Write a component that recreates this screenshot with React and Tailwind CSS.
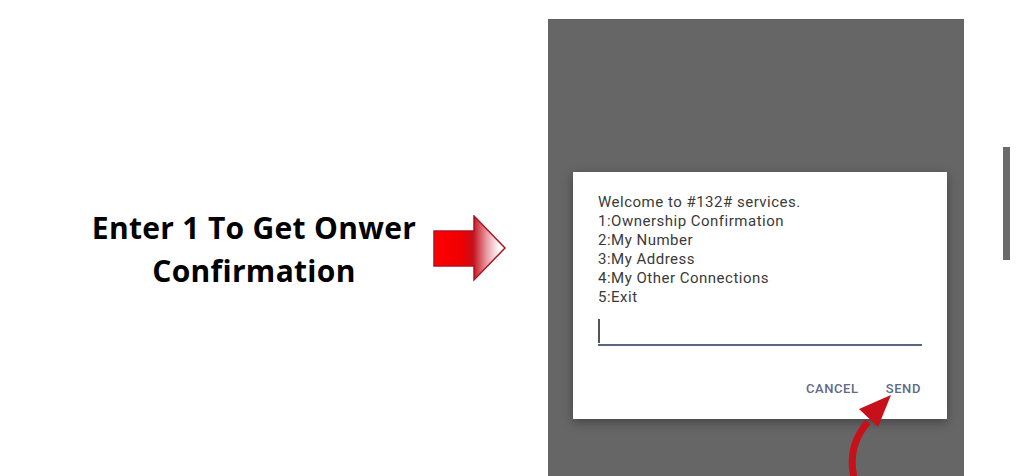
import React from 'react';

const menuLines = [
  'Welcome to #132# services.',
  '1:Ownership Confirmation',
  '2:My Number',
  '3:My Address',
  '4:My Other Connections',
  '5:Exit',
];

const RightArrow = () => (
  <svg width="74" height="68" viewBox="0 0 74 68" className="shrink-0">
    <defs>
      <linearGradient id="arrowFill" x1="0" y1="0" x2="1" y2="0">
        <stop offset="0" stopColor="#ff0000" />
        <stop offset="0.4" stopColor="#ee0000" />
        <stop offset="0.55" stopColor="#c4101c" />
        <stop offset="0.75" stopColor="#e8a0a6" />
        <stop offset="0.92" stopColor="#ffffff" />
        <stop offset="1" stopColor="#ffffff" />
      </linearGradient>
    </defs>
    <path
      d="M1 16 H41 V1 L72 33 L41 65 V51 H1 Z"
      fill="url(#arrowFill)"
      stroke="#b3121f"
      strokeWidth="1.5"
      strokeLinejoin="miter"
    />
  </svg>
);

const CurvedArrow = () => (
  <svg width="60" height="90" viewBox="0 0 60 90" className="absolute left-[838px] top-[390px]">
    <path
      d="M16 88 C12 70 14 50 30 32"
      fill="none"
      stroke="#c8101a"
      strokeWidth="7"
      strokeLinecap="butt"
    />
    <path d="M53 5 L21 19 L40 37 Z" fill="#c8101a" />
  </svg>
);

const App = () => {
  return (
    <div className="relative w-[1024px] h-[476px] bg-white overflow-hidden flex">
      {/* Left caption */}
      <div className="w-[548px] shrink-0 flex items-center pl-[84px] pt-[22px]">
        <p
          className="w-[340px] text-center text-[30px] leading-[43px] font-bold tracking-[0.3px] text-black"
          style={{ fontFamily: '"Open Sans", "Liberation Sans", sans-serif' }}
        >
          Enter 1 To Get Onwer
          <br />
          Confirmation
        </p>
        <div className="ml-[9px] mt-[-1px]">
          <RightArrow />
        </div>
      </div>

      {/* Phone screen */}
      <div className="mt-[19px] w-[416px] h-[457px] bg-[#666666] shrink-0 border-t border-[#5f5f6a]">
        <div
          className="ml-[25px] mt-[152px] w-[374px] h-[247px] bg-white shadow-[0_3px_10px_rgba(0,0,0,0.35)] px-[25px] pt-[21px] flex flex-col"
          style={{ fontFamily: 'Roboto, "Liberation Sans", sans-serif' }}
        >
          <div className="text-[15px] leading-[19px] tracking-[0.5px] text-[#3a3a3a]">
            {menuLines.map((line) => (
              <div key={line}>{line}</div>
            ))}
          </div>
          <div className="mt-[12px] h-[27px] w-[324px] border-b-2 border-[#5a6585] flex items-end pb-[1px]">
            <div className="w-[2px] h-[24px] bg-[#555]" />
          </div>
          <div className="mt-[33px] flex justify-end gap-[27px] pr-[1px] text-[13px] font-medium tracking-[0.6px] text-[#5e6a88]">
            <span>CANCEL</span>
            <span>SEND</span>
          </div>
        </div>
      </div>

      {/* Scroll indicator */}
      <div className="ml-[39px] mt-[147px] w-[7px] h-[113px] bg-[#6a6a6a]" />

      <CurvedArrow />
    </div>
  );
};

export default App;
